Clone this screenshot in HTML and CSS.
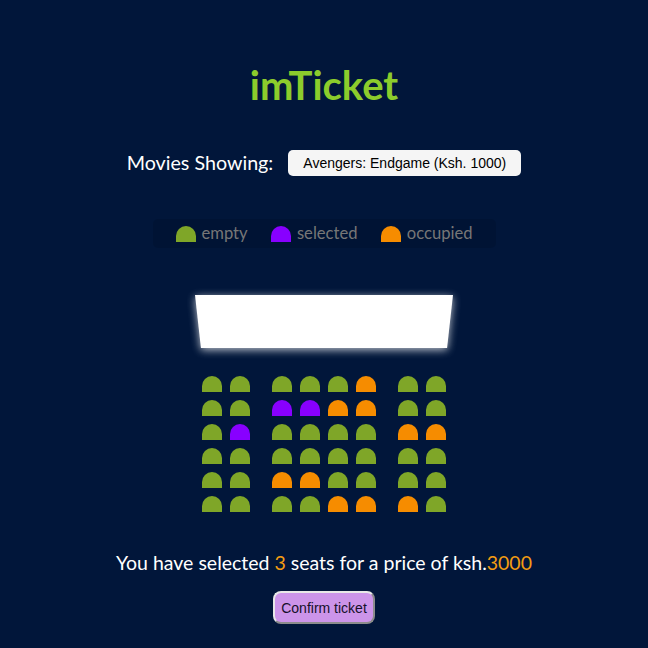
FILE: index.html
```html
<!DOCTYPE html>
<html lang="en">
<head>
<meta charset="utf-8">
<title>imTicket</title>
<link rel="stylesheet" href="styles.css">
</head>
<body>
<h1 class="title">imTicket</h1>

<div class="movie-row">
  <label class="movie-label" for="movie">Movies Showing:</label>
  <select id="movie" class="movie-select">
    <option>Avengers: Endgame (Ksh. 1000)</option>
  </select>
</div>

<ul class="showcase">
  <li class="showcase-item"><span class="seat"></span><small class="showcase-text">empty</small></li>
  <li class="showcase-item"><span class="seat selected"></span><small class="showcase-text">selected</small></li>
  <li class="showcase-item"><span class="seat occupied"></span><small class="showcase-text">occupied</small></li>
</ul>

<div class="hall">
  <div class="screen-glow"><div class="screen"></div></div>

  <div class="seats">
    <div class="row">
      <span class="seat"></span><span class="seat"></span>
      <span class="seat"></span><span class="seat"></span><span class="seat"></span><span class="seat occupied"></span>
      <span class="seat"></span><span class="seat"></span>
    </div>
    <div class="row">
      <span class="seat"></span><span class="seat"></span>
      <span class="seat selected"></span><span class="seat selected"></span><span class="seat occupied"></span><span class="seat occupied"></span>
      <span class="seat"></span><span class="seat"></span>
    </div>
    <div class="row">
      <span class="seat"></span><span class="seat selected"></span>
      <span class="seat"></span><span class="seat"></span><span class="seat"></span><span class="seat"></span>
      <span class="seat occupied"></span><span class="seat occupied"></span>
    </div>
    <div class="row">
      <span class="seat"></span><span class="seat"></span>
      <span class="seat"></span><span class="seat"></span><span class="seat"></span><span class="seat"></span>
      <span class="seat"></span><span class="seat"></span>
    </div>
    <div class="row">
      <span class="seat"></span><span class="seat"></span>
      <span class="seat occupied"></span><span class="seat occupied"></span><span class="seat"></span><span class="seat"></span>
      <span class="seat"></span><span class="seat"></span>
    </div>
    <div class="row">
      <span class="seat"></span><span class="seat"></span>
      <span class="seat"></span><span class="seat"></span><span class="seat occupied"></span><span class="seat occupied"></span>
      <span class="seat occupied"></span><span class="seat"></span>
    </div>
  </div>
</div>

<p class="summary">You have selected <span class="highlight">3</span> seats for a price of ksh.<span class="highlight">3000</span></p>

<button class="confirm" type="button">Confirm ticket</button>
</body>
</html>
```

FILE: styles.css
```css
* {
  box-sizing: border-box;
}

body {
  margin: 0;
  min-height: 648px;
  background: #01163a;
  color: #ffffff;
  font-family: Lato, "Open Sans", sans-serif;
  display: flex;
  flex-direction: column;
  align-items: center;
}

.title {
  margin: 61px 0 0;
  font-size: 40px;
  font-weight: 700;
  line-height: 48px;
  color: #8ccc2c;
}

.movie-row {
  margin-top: 41px;
  display: flex;
  align-items: center;
}

.movie-label {
  font-size: 19.7px;
  line-height: 24px;
  margin-right: 15px;
}

.movie-select {
  appearance: none;
  -webkit-appearance: none;
  border: 0;
  border-radius: 5px;
  background: #f5f5f5;
  color: #000;
  font-family: "Liberation Sans", Arial, sans-serif;
  font-size: 14px;
  height: 26px;
  width: 233px;
  padding: 0 14px;
  text-align: center;
}

.showcase {
  list-style: none;
  margin: 43px 0 0;
  padding: 5px 13px;
  width: 343px;
  height: 29px;
  border-radius: 5px;
  background: rgba(0, 0, 0, 0.1);
  display: flex;
  justify-content: space-between;
  align-items: center;
  color: #777777;
}

.showcase-item {
  display: flex;
  align-items: center;
  margin: 0 10px;
}

.showcase-text {
  font-size: 16.6px;
  line-height: 19px;
  margin-left: 6px;
}

.seat {
  display: block;
  width: 20px;
  height: 16px;
  background: #7fa628;
  border-top-left-radius: 10px;
  border-top-right-radius: 10px;
}

.seat.selected {
  background: #8800ff;
}

.seat.occupied {
  background: #f68c00;
}

.hall {
  margin-top: 47px;
  display: flex;
  flex-direction: column;
  align-items: center;
}

.screen-glow {
  filter: drop-shadow(0 2px 4px rgba(255, 255, 255, 0.75));
}

.screen {
  width: 258px;
  height: 53px;
  background: #ffffff;
  clip-path: polygon(0 0, 100% 0, 97.7% 100%, 2.3% 100%);
}

.seats {
  margin-top: 24px;
  display: flex;
  flex-direction: column;
}

.row {
  display: flex;
}

.row .seat {
  margin: 4px;
}

.row .seat:nth-of-type(2) {
  margin-right: 18px;
}

.row .seat:nth-last-of-type(2) {
  margin-left: 18px;
}

.summary {
  margin: 35px 0 0;
  font-size: 19.5px;
  line-height: 24px;
}

.highlight {
  color: #f39c12;
}

.confirm {
  margin-top: 16px;
  height: 33px;
  padding: 0 6px;
  border: 2px solid;
  border-color: #e8e8e8 #8c8c8c #8c8c8c #e8e8e8;
  border-radius: 8px;
  background: #cc94e9;
  color: #15102a;
  font-family: "Liberation Sans", Arial, sans-serif;
  font-size: 14px;
}
```
